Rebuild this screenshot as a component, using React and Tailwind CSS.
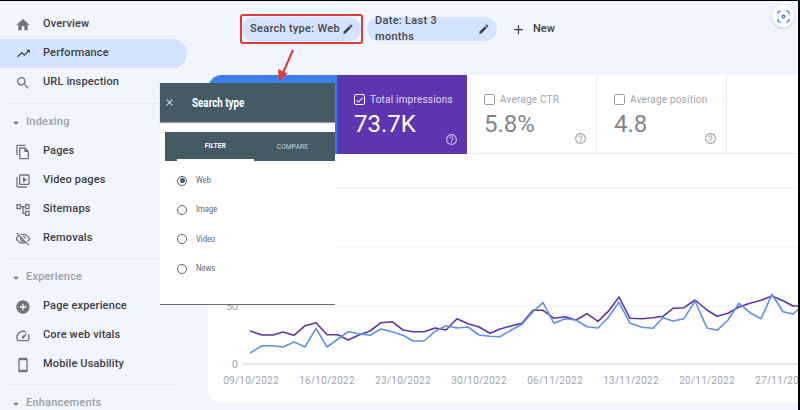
import {
  MdHome, MdTrendingUp, MdSearch, MdOutlineFileCopy, MdOutlineVideoLibrary, MdOutlineAccountTree,
  MdOutlineVisibilityOff, MdAddCircle, MdOutlineSpeed, MdOutlineSmartphone, MdArrowDropDown,
  MdEdit, MdAdd, MdOutlineHelpOutline, MdClose, MdCheck,
} from 'react-icons/md';

const purple = '136,331 170,335 205,335 235,332 268,335.3 300,325.7 333,322.7 365,334.7 398,334.7 430,340 462,335 495,331 528,322.7 560,321.7 594,330 625,331.7 657,331.7 690,328 722,330 755,318.7 790,323.7 822,327 855,333.3 885,329 910,324 '.trim();

const toScreen = (pts) => pts.map(([x, y]) => `${x} ${y}`).join(' ');

const purplePoints = toScreen([
  [250, 331], [262, 335], [273, 335], [283, 332], [294, 335.3], [305, 325.7], [316, 322.7], [327, 334.7],
  [338, 334.7], [348, 340], [359, 335], [370, 331], [381, 322.7], [392, 321.7], [403, 330], [413, 331.7],
  [424, 331.7], [435, 328], [446, 330], [457, 318.7], [468, 323.7], [479, 327], [490, 333.3], [500, 329],
  [511, 326], [522, 323.3], [533, 310.3], [543, 310.3], [554, 318.3], [565, 316.7], [576, 320], [587, 313.7],
  [598, 321.3], [608, 311.7], [619, 297], [630, 318.3], [642, 318.7], [653, 317.7], [663, 316.3], [673, 308.3],
  [684, 307.7], [695, 300], [707, 310], [717, 316.3], [728, 313.3], [739, 307], [750, 303.3], [761, 300.3],
  [772, 296], [783, 300.7], [793, 306], [800, 306],
]);

const bluePoints = toScreen([
  [250, 353], [262, 345.7], [273, 345.7], [283, 347], [294, 342], [305, 347], [316, 328.3], [327, 347],
  [338, 339], [348, 331.7], [359, 333.7], [370, 335.3], [381, 329], [392, 331.7], [403, 335.3], [413, 341],
  [424, 341], [435, 331.3], [446, 325.7], [457, 328], [468, 327], [479, 335], [490, 336.3], [500, 336.7],
  [511, 330.3], [522, 324.3], [533, 311.7], [543, 302.7], [554, 323.3], [565, 318.7], [576, 320], [587, 326.7],
  [598, 328], [608, 317.7], [619, 302.3], [630, 323.3], [642, 327.3], [653, 328.3], [663, 317.7], [673, 321],
  [684, 318.7], [695, 301], [707, 328], [717, 330.3], [728, 320], [739, 303.3], [750, 312.7], [761, 318.7],
  [772, 294.3], [783, 311.7], [793, 314], [800, 307.7],
]);

const dates = ['09/10/2022', '16/10/2022', '23/10/2022', '30/10/2022', '06/11/2022', '13/11/2022', '20/11/2022', '27/11/2022'];

function NavItem({ icon: Icon, label, active }) {
  return (
    <div className={`flex h-[29px] items-center rounded-r-full ${active ? 'bg-[#d3e3fd] w-[187px]' : ''}`}>
      <span className="flex w-[43px] justify-center pl-[3px] text-[#70757a]">
        <Icon size={active ? 15 : 16} className={active ? 'text-[#3c4043]' : ''} />
      </span>
      <span className="text-[11px] font-medium tracking-[0.15px] text-[#3c4043]">{label}</span>
    </div>
  );
}

function NavHeader({ label }) {
  return (
    <div className="flex h-[29px] items-center">
      <span className="flex w-[26px] justify-end pr-[3px] text-[#70757a]">
        <MdArrowDropDown size={14} />
      </span>
      <span className="text-[11px] font-medium tracking-[0.2px] text-[#9aa0a6]">{label}</span>
    </div>
  );
}

function Divider({ className }) {
  return <div className={`ml-2 h-px w-[170px] bg-[#e6eaf1] ${className}`} />;
}

function Sidebar() {
  return (
    <aside className="w-[208px] shrink-0 pt-[9px]">
      <NavItem icon={MdHome} label="Overview" />
      <NavItem icon={MdTrendingUp} label="Performance" active />
      <NavItem icon={MdSearch} label="URL inspection" />
      <Divider className="mt-[6px] mb-[4px]" />
      <NavHeader label="Indexing" />
      <NavItem icon={MdOutlineFileCopy} label="Pages" />
      <NavItem icon={MdOutlineVideoLibrary} label="Video pages" />
      <NavItem icon={MdOutlineAccountTree} label="Sitemaps" />
      <NavItem icon={MdOutlineVisibilityOff} label="Removals" />
      <Divider className="mt-[5px] mb-[4px]" />
      <NavHeader label="Experience" />
      <NavItem icon={MdAddCircle} label="Page experience" />
      <NavItem icon={MdOutlineSpeed} label="Core web vitals" />
      <NavItem icon={MdOutlineSmartphone} label="Mobile Usability" />
      <Divider className="mt-[5px] mb-[4px]" />
      <NavHeader label="Enhancements" />
    </aside>
  );
}

function Chip({ label, className, children }) {
  return (
    <div className={`relative flex h-6 items-center justify-between rounded-full bg-[#d3e3fd] pl-2 pr-[7px] text-[11px] font-medium tracking-[0.3px] text-[#44474a] ${className}`}>
      <span>{label}</span>
      <MdEdit size={12} className="text-[#3c4043]" />
      {children}
    </div>
  );
}

function Metric({ label, value, active, className }) {
  return (
    <div className={`relative w-[130px] shrink-0 pl-[17px] pt-[17px] ${active ? 'bg-[#5e35b1] text-white' : 'border-r border-b border-[#e8eaed] bg-white text-[#80868b]'} ${className}`}>
      <div className="flex items-center gap-[5px]">
        <span className={`flex size-[11px] items-center justify-center rounded-[2px] border ${active ? 'border-white' : 'border-[#9aa0a6]'}`}>
          {active && <MdCheck size={10} />}
        </span>
        <span className={`text-[10px] tracking-[0.2px] ${active ? 'text-[#e3d9f3]' : 'text-[#a0a4a8]'}`}>{label}</span>
      </div>
      <div className="mt-[1px] text-[24px] leading-[32px]">{value}</div>
      <MdOutlineHelpOutline size={13} className={`absolute right-[9px] bottom-[8px] ${active ? 'text-[#c9b8e6]' : 'text-[#a0a4a8]'}`} />
    </div>
  );
}

function Chart() {
  return (
    <div className="h-[249px] rounded-bl-[14px] bg-white">
      <svg viewBox="208 154 590 218" className="block h-[218px] w-[590px]">
        <g stroke="#f1f2f4" strokeWidth="1">
          <line x1="243" y1="188" x2="798" y2="188" />
          <line x1="243" y1="247" x2="798" y2="247" />
          <line x1="243" y1="306" x2="798" y2="306" />
        </g>
        <line x1="243" y1="364" x2="798" y2="364" stroke="#cfd0d2" strokeWidth="1.2" />
        <text x="238" y="310" textAnchor="end" fontSize="10.5" fill="#9aa0a6">50</text>
        <text x="238" y="368" textAnchor="end" fontSize="10.5" fill="#9aa0a6">0</text>
        <polyline points={purplePoints} fill="none" stroke="#5e35a8" strokeWidth="1.6" strokeLinejoin="round" />
        <polyline points={bluePoints} fill="none" stroke="#5b91e8" strokeWidth="1.6" strokeLinejoin="round" />
      </svg>
      <div className="flex overflow-hidden pl-[5px] pt-px text-[10px] tracking-[0.25px] text-[#a2a5a9]">
        {dates.map((d) => (
          <span key={d} className="w-[76px] shrink-0 text-center">{d}</span>
        ))}
      </div>
    </div>
  );
}

function SearchTypePanel() {
  const options = ['Web', 'Image', 'Video', 'News'];
  return (
    <div className="absolute top-[82px] left-[160px] flex h-[222px] w-[175px] flex-col border-b border-[#6b6f73] bg-white">
      <div className="flex h-[39px] shrink-0 items-center bg-[#455a64] text-white shadow-[0_1px_1px_#9aa0a6]">
        <MdClose size={11} className="ml-[4px] text-[#e0e4e6]" />
        <span className="ml-[17px] origin-left scale-x-[0.82] text-[12px] font-bold">Search type</span>
      </div>
      <div className="mt-[10px] ml-[5px] flex h-[29px] shrink-0 bg-[#455a64] pl-3 text-[8px]">
        <span className="flex w-[77px] items-center justify-center border-b-2 border-white font-bold text-white"><span className="scale-x-[0.85]">FILTER</span></span>
        <span className="flex w-[77px] items-center justify-center text-[#c9d1d5]"><span className="scale-x-[0.85]">COMPARE</span></span>
      </div>
      <div className="flex flex-col pl-[17px] pt-[5px]">
        {options.map((o, i) => (
          <div key={o} className="flex h-[29.4px] items-center gap-[9px]">
            <span className={`flex size-[10px] items-center justify-center rounded-full border ${i === 0 ? 'border-[#455a64]' : 'border-[#5f6368]'}`}>
              {i === 0 && <span className="size-[5px] rounded-full bg-[#455a64]" />}
            </span>
            <span className="origin-left scale-x-[0.85] text-[9px] text-[#5f6368]">{o}</span>
          </div>
        ))}
      </div>
    </div>
  );
}

export default function App() {
  return (
    <div className="relative flex h-[410px] w-[800px] overflow-hidden border-t border-r-2 border-t-black border-r-black bg-[#f1f5fd] font-['Roboto',sans-serif]">
      <Sidebar />

      <main className="w-[590px] shrink-0">
        <div className="flex items-center pl-[34px] pt-4">
          <Chip label="Search type: Web" className="w-[119px]">
            <span className="absolute -inset-x-[2px] -inset-y-[3px] rounded-[3px] border-2 border-[#e53935]" />
          </Chip>
          <Chip label="Date: Last 3 months" className="ml-[6px] w-[130px]" />
          <div className="ml-[14px] flex items-center gap-[7px] text-[11px] font-medium text-[#3c4043]">
            <MdAdd size={15} />
            <span>New</span>
          </div>
        </div>

        <div className="mt-[34px] flex h-[79px]">
          <Metric label="Total clicks" value="" active className="rounded-tl-[14px] !bg-[#3d7fe8]" />
          <Metric label="Total impressions" value="73.7K" active className="-ml-px" />
          <Metric label="Average CTR" value="5.8%" />
          <Metric label="Average position" value="4.8" />
          <div className="flex-1 border-b border-[#e8eaed] bg-white" />
        </div>

        <Chart />
      </main>

      <SearchTypePanel />

      {/* arrow from the chip down to the panel */}
      <svg className="absolute top-[47px] left-[274px]" width="24" height="36" viewBox="0 0 24 36">
        <path d="M19 2 L8.5 26" stroke="#e53935" strokeWidth="2" fill="none" />
        <path d="M5 33 L4 21 L13.5 25.5 Z" fill="#e53935" />
      </svg>

      {/* lens button */}
      <div className="absolute top-[4px] right-[4px] flex size-[22px] items-center justify-center rounded-full bg-white shadow-[0_1px_3px_rgba(60,64,67,0.25)]">
        <svg width="13" height="13" viewBox="0 0 13 13" fill="none" stroke="#3b6fd8" strokeWidth="1.2">
          <path d="M1 4V2.5A1.5 1.5 0 0 1 2.5 1H4M9 1h1.5A1.5 1.5 0 0 1 12 2.5V4M12 9v1.5a1.5 1.5 0 0 1-1.5 1.5H9M4 12H2.5A1.5 1.5 0 0 1 1 10.5V9" />
          <circle cx="6.5" cy="6.5" r="1.4" />
        </svg>
      </div>
    </div>
  );
}
